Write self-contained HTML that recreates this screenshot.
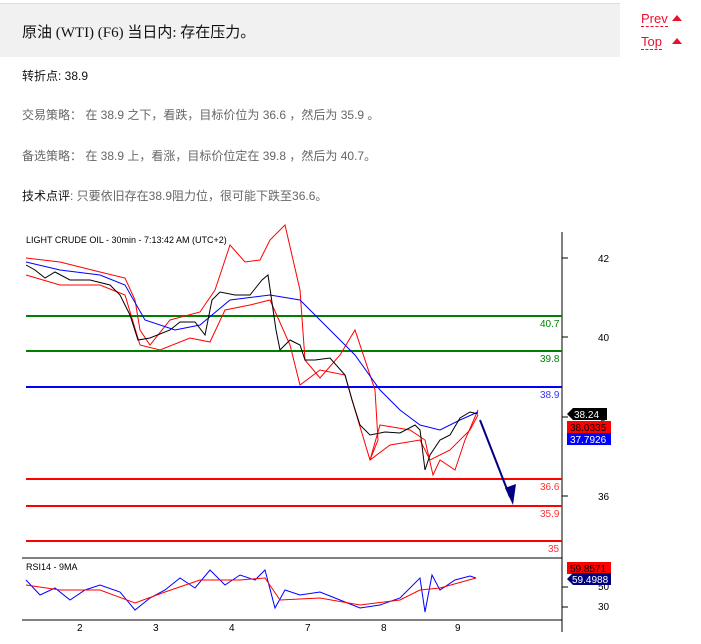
<!DOCTYPE html>
<html><head><meta charset="utf-8"><style>
body{margin:0;width:701px;height:644px;background:#fff;font-family:"Liberation Sans","Noto Sans CJK SC",sans-serif;position:relative;overflow:hidden}
.hd{position:absolute;left:0;top:3px;width:620px;height:53px;background:#f1f1f1;border-top:1px solid #ddd}
.hd div{position:absolute;left:22px;top:17px;font-size:15px;color:#111;font-family:"Liberation Serif","Noto Sans CJK SC",serif}
.nav{position:absolute;left:641px;font-size:13px;color:#e8112d;border-bottom:1px dashed #e8112d;line-height:15px}
.tri{position:absolute;left:672px;width:0;height:0;border-left:5px solid transparent;border-right:5px solid transparent;border-bottom:6px solid #e8112d}
p{position:absolute;left:22px;margin:0;font-size:12px;color:#666}
b{font-weight:normal;color:#111}
</style></head><body>
<div class="hd"><div>原油 (WTI) (F6) 当日内: 存在压力。</div></div>
<div class="nav" style="top:11px">Prev</div><div class="tri" style="top:15px"></div>
<div class="nav" style="top:34px">Top</div><div class="tri" style="top:38px"></div>
<p style="top:67px;color:#111"><b>转折点</b>: 38.9</p>
<p style="top:106px">交易策略： 在 38.9 之下，看跌，目标价位为 36.6 ，然后为 35.9 。</p>
<p style="top:147px">备选策略： 在 38.9 上，看涨，目标价位定在 39.8 ，然后为 40.7。</p>
<p style="top:187px"><b>技术点评</b>: 只要依旧存在38.9阻力位，很可能下跌至36.6。</p>
<svg style="position:absolute;left:0;top:0" width="701" height="644" font-family="Liberation Sans" font-size="10">
<text x="26" y="243" font-size="9" fill="#000">LIGHT CRUDE OIL - 30min - 7:13:42 AM (UTC+2)</text>
<line x1="562" y1="232" x2="562" y2="632" stroke="#000"/>
<line x1="22" y1="558" x2="562" y2="558" stroke="#000"/>
<line x1="22" y1="620" x2="562" y2="620" stroke="#000"/>
<g fill="#000" font-size="10"><text x="598" y="262">42</text><text x="598" y="341">40</text><text x="600" y="421">8</text><text x="598" y="500">36</text><text x="598" y="590">50</text><text x="598" y="610">30</text>
<text x="77" y="631">2</text><text x="153" y="631">3</text><text x="229" y="631">4</text><text x="305" y="631">7</text><text x="381" y="631">8</text><text x="455" y="631">9</text></g>
<g stroke="#000"><line x1="562" y1="258" x2="568" y2="258"/><line x1="562" y1="337" x2="568" y2="337"/><line x1="562" y1="417" x2="568" y2="417"/><line x1="562" y1="496" x2="568" y2="496"/><line x1="562" y1="587" x2="568" y2="587"/><line x1="562" y1="607" x2="568" y2="607"/></g>
<line x1="26" y1="316" x2="562" y2="316" stroke="#008000" stroke-width="2"/><text x="540" y="327" fill="#008000">40.7</text>
<line x1="26" y1="351" x2="562" y2="351" stroke="#008000" stroke-width="2"/><text x="540" y="362" fill="#008000">39.8</text>
<line x1="26" y1="387" x2="562" y2="387" stroke="#0000ff" stroke-width="2"/><text x="540" y="398" fill="#3333ff">38.9</text>
<line x1="26" y1="479" x2="562" y2="479" stroke="#f00" stroke-width="2"/><text x="540" y="490" fill="#f33">36.6</text>
<line x1="26" y1="506" x2="562" y2="506" stroke="#f00" stroke-width="2"/><text x="540" y="517" fill="#f33">35.9</text>
<line x1="26" y1="541" x2="562" y2="541" stroke="#f00" stroke-width="2"/><text x="548" y="552" fill="#f33">35</text>
<polyline fill="none" stroke="#f00" points="26,258 60,262 100,272 125,278 135,300 140,330 150,345 170,320 200,312 215,290 230,245 245,262 260,260 270,240 285,225 300,290 305,360 320,378 340,355 355,330 375,390 378,440 370,460 380,425 410,430 425,440 433,475 440,460 455,470 465,440 478,410"/>
<polyline fill="none" stroke="#f00" points="26,275 60,285 100,285 125,295 140,345 160,350 190,338 210,342 225,310 250,305 270,300 290,345 300,385 320,370 345,375 355,410 370,460 390,445 420,440 430,460 450,450 470,430 478,415"/>
<polyline fill="none" stroke="#00f" points="26,262 60,270 100,275 125,285 145,320 175,330 200,325 230,300 270,295 300,300 330,330 355,355 380,390 400,410 420,425 440,430 460,420 478,412"/>
<polyline fill="none" stroke="#000" points="26,265 35,270 45,278 55,272 70,280 90,280 110,285 120,295 130,315 138,340 150,338 170,330 180,322 195,322 205,335 212,300 220,292 235,295 250,295 262,280 268,275 276,330 280,350 290,340 300,345 305,360 315,360 330,358 345,375 352,400 360,425 370,435 385,432 400,433 415,425 420,430 425,470 430,455 440,440 450,435 460,418 470,412 478,414"/>
<line x1="480" y1="420" x2="510" y2="497" stroke="#000080" stroke-width="2"/><polygon points="505,488 516,484 513,505" fill="#000080"/>
<polygon points="567,414 573,408 607,408 607,420 573,420" fill="#000"/><text x="574" y="418" fill="#fff">38.24</text>
<rect x="567" y="421" width="44" height="12" fill="#f00"/><text x="570" y="431" fill="#000">38.0335</text>
<rect x="567" y="433" width="44" height="12" fill="#00f"/><text x="570" y="443" fill="#fff">37.7926</text>
<text x="26" y="570" font-size="9">RSI14 - 9MA</text>
<polyline fill="none" stroke="#00f" points="26,580 40,595 55,588 70,600 85,590 100,585 120,592 135,610 150,598 165,590 180,578 195,588 210,570 225,585 240,575 255,580 265,570 275,608 285,590 300,595 320,592 340,600 360,608 380,605 400,598 420,578 425,612 432,575 440,590 455,580 470,576 476,578"/>
<polyline fill="none" stroke="#f00" points="26,585 60,590 100,590 135,603 165,592 200,580 240,580 265,578 280,600 320,598 360,605 400,600 420,590 440,588 476,578"/>
<rect x="567" y="562" width="44" height="12" fill="#f00"/><text x="570" y="572" fill="#000">59.8571</text>
<polygon points="567,579 573,573 611,573 611,585 573,585" fill="#000080"/><text x="572" y="583" fill="#fff">59.4988</text>
</svg>
</body></html>
